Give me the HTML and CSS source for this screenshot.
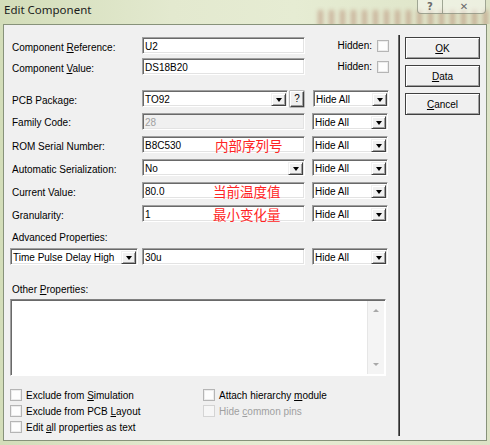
FILE: index.html
```html
<!DOCTYPE html>
<html>
<head>
<meta charset="utf-8">
<link rel="stylesheet" href="styles.css">
</head>
<body>
<div class="window">
  <div class="titlebar">
    <div class="glass"></div>
    <span class="title">Edit Component</span>
    <div class="caption">
      <div class="cbtn help">?</div>
      <div class="cbtn close">✕</div>
    </div>
  </div>
  <div class="client">
    <div class="main">
      <div class="row">
        <div class="lbl">Component <u>R</u>eference:</div>
        <div class="field w163">U2</div>
        <div class="hid"><span>Hidden:</span><span class="box"></span></div>
      </div>
      <div class="row mt4">
        <div class="lbl">Component <u>V</u>alue:</div>
        <div class="field w163">DS18B20</div>
        <div class="hid"><span>Hidden:</span><span class="box"></span></div>
      </div>
      <div class="row mt15">
        <div class="lbl">PCB Package:</div>
        <div class="field w146"><span>TO92</span><span class="arrow"></span></div>
        <div class="qbtn">?</div>
        <div class="field w76 sel9"><span>Hide All</span><span class="arrow"></span></div>
      </div>
      <div class="row mt6">
        <div class="lbl lbl-c">Family Code:</div>
        <div class="field w163 disabled">28</div>
        <div class="field w76 sel"><span>Hide All</span><span class="arrow"></span></div>
      </div>
      <div class="row mt6">
        <div class="lbl">ROM Serial Number:</div>
        <div class="field w163"><span class="val">B8C530</span><span class="note n2">内部序列号</span></div>
        <div class="field w76 sel"><span>Hide All</span><span class="arrow"></span></div>
      </div>
      <div class="row mt6">
        <div class="lbl">Automatic Serialization:</div>
        <div class="field w163"><span>No</span><span class="arrow"></span></div>
        <div class="field w76 sel"><span>Hide All</span><span class="arrow"></span></div>
      </div>
      <div class="row mt6">
        <div class="lbl">Current Value:</div>
        <div class="field w163"><span class="val">80.0</span><span class="note">当前温度值</span></div>
        <div class="field w76 sel"><span>Hide All</span><span class="arrow"></span></div>
      </div>
      <div class="row mt6">
        <div class="lbl">Granularity:</div>
        <div class="field w163"><span class="val">1</span><span class="note">最小变化量</span></div>
        <div class="field w76 sel"><span>Hide All</span><span class="arrow"></span></div>
      </div>
      <div class="caption-lbl adv">Advanced Properties:</div>
      <div class="row row-adv">
        <div class="field w128"><span>Time Pulse Delay High</span><span class="arrow"></span></div>
        <div class="field w163 ml4">30u</div>
        <div class="field w76 sel"><span>Hide All</span><span class="arrow"></span></div>
      </div>
      <div class="caption-lbl other">Other <u>P</u>roperties:</div>
      <div class="memo">
        <div class="vscroll"><span class="up"></span><span class="down"></span></div>
      </div>
      <div class="checks">
        <div class="chk"><span class="box"></span><span>Exclude from <u>S</u>imulation</span></div>
        <div class="chk"><span class="box"></span><span>Attach hierarchy <u>m</u>odule</span></div>
        <div class="chk"><span class="box"></span><span>Exclude from PCB <u>L</u>ayout</span></div>
        <div class="chk dis"><span class="box"></span><span>Hide <u>c</u>ommon pins</span></div>
        <div class="chk"><span class="box"></span><span>Edit <u>a</u>ll properties as text</span></div>
      </div>
    </div>
    <div class="sep"></div>
    <div class="side">
      <div class="btn"><span><u>O</u>K</span></div>
      <div class="btn"><span><u>D</u>ata</span></div>
      <div class="btn"><span><u>C</u>ancel</span></div>
    </div>
  </div>
</div>
</body>
</html>
```
FILE: styles.css
```css
* { box-sizing: border-box; }
html, body { margin: 0; padding: 0; }
body {
  width: 490px;
  height: 445px;
  overflow: hidden;
  background: #dce5c5;
  font-family: "Liberation Sans", Arial, sans-serif;
  font-size: 10px;
  color: #000;
}
u { text-decoration: underline; text-underline-offset: 1px; }

.window {
  width: 490px;
  height: 445px;
  display: flex;
  flex-direction: column;
  background: linear-gradient(90deg, #d3ddb9 0%, #e3e9cf 35%, #e6ecd3 60%, #dde3c6 100%);
  position: relative;
  overflow: hidden;
}
.titlebar {
  height: 24px;
  display: flex;
  align-items: flex-start;
  position: relative;
  overflow: hidden;
}
.glass {
  position: absolute;
  left: 318px;
  top: 10px;
  width: 172px;
  height: 18px;
  background:
    repeating-linear-gradient(90deg, rgba(150, 70, 50, 0.55) 0 5px, rgba(150, 70, 50, 0) 5px 11px);
  filter: blur(2.2px);
  opacity: 0.6;
}
.title {
  position: relative;
  font-family: "Noto Sans", sans-serif;
  font-size: 11.5px;
  color: #1b1b1b;
  padding: 0 0 0 4px;
  line-height: 19px;
}
.caption {
  position: relative;
  margin-left: auto;
  margin-right: 4px;
  display: flex;
}
.cbtn {
  height: 14px;
  border: 1px solid rgba(95, 105, 85, 0.55);
  border-top: none;
  background: rgba(255, 255, 255, 0.45);
  display: flex;
  align-items: center;
  justify-content: center;
  color: #6a6a6a;
  font-family: "DejaVu Sans", sans-serif;
  font-size: 10px;
  font-weight: bold;
  line-height: 12px;
}
.help { width: 26px; border-bottom-left-radius: 4px; }
.close { width: 43px; border-left: none; border-bottom-right-radius: 4px; }

.client {
  margin: 0 3px;
  height: 417px;
  border: 1px solid #87927a;
  background: #f0f0f0;
  display: flex;
}
.main { width: 394px; padding-top: 12px; }
.sep {
  width: 2px;
  margin-top: 10px;
  height: 401px;
  background: #2e2e2e;
  border-left: 1px solid #6a6a6a;
}
.side {
  padding: 12px 0 0 5px;
  display: flex;
  flex-direction: column;
  gap: 6px;
}
.btn {
  width: 75px;
  height: 22px;
  background: #f0f0f0;
  border: 1px solid #404040;
  box-shadow: inset 1px 1px 0 #fff, inset -1px -1px 0 #a0a0a0;
  display: flex;
  align-items: center;
  justify-content: center;
}

.row {
  display: flex;
  align-items: center;
  height: 17px;
  padding-left: 8px;
}
.mt4 { margin-top: 4px; }
.mt6 { margin-top: 6px; }
.mt15 { margin-top: 15px; }
.lbl {
  width: 130px;
  white-space: nowrap;
  padding-top: 4px;
  line-height: 13px;
}
.lbl-c { padding-top: 1px; }

.field {
  height: 17px;
  background: #fff;
  border: 1px solid;
  border-color: #a0a0a0 #fff #fff #a0a0a0;
  box-shadow: inset 1px 1px 0 #696969, inset -1px -1px 0 #e3e3e3;
  padding: 2px 1px 1px 2px;
  display: flex;
  align-items: center;
  line-height: 13px;
  white-space: nowrap;
}
.w163 { width: 163px; }
.w146 { width: 146px; }
.w128 { width: 128px; }
.w76 { width: 76px; }
.sel { margin-left: 7px; }
.sel9 { margin-left: 9px; }
.ml4 { margin-left: 4px; }
.disabled { background: #f0f0f0; color: #a0a0a0; }

.arrow {
  margin-left: auto;
  align-self: flex-end;
  margin-bottom: -1px;
  width: 15px;
  height: 13px;
  background: #f0f0f0;
  border: 1px solid;
  border-color: #f0f0f0 #404040 #404040 #f0f0f0;
  box-shadow: inset 1px 1px 0 #fff, inset -1px -1px 0 #a0a0a0;
  display: flex;
  align-items: center;
  justify-content: center;
}
.arrow::after {
  content: "";
  border-left: 3.5px solid transparent;
  border-right: 3.5px solid transparent;
  border-top: 4px solid #000;
}
.qbtn {
  width: 14px;
  height: 16px;
  margin-left: 2px;
  background: #f0f0f0;
  border: 1px solid;
  border-color: #fff #404040 #404040 #fff;
  box-shadow: inset -1px -1px 0 #a0a0a0, 0 0 0 0.5px #808080;
  text-align: center;
  line-height: 14px;
}

.hid {
  width: 84px;
  display: flex;
  justify-content: flex-end;
  align-items: center;
  gap: 5px;
}

.val { width: 68px; }
.note {
  font-family: "Noto Sans CJK SC", sans-serif;
  font-size: 13.5px;
  line-height: 13px;
  color: #ff2424;
}
.n2 { margin-left: 2px; }

.caption-lbl { padding-left: 8px; line-height: 14px; }
.adv { margin-top: 9px; }
.row-adv { margin-top: 3px; padding-left: 6px; }
.other { margin-top: 18px; }

.memo {
  margin: 2px 0 0 6px;
  width: 376px;
  height: 77px;
  background: #fff;
  border: 1px solid;
  border-color: #808080 #fff #fff #a0a0a0;
  box-shadow: inset 1px 1px 0 #696969;
  padding: 1px;
  display: flex;
  justify-content: flex-end;
}
.vscroll {
  width: 17px;
  background: #f4f4f4;
  border-left: 1px solid #e6e6e6;
  display: flex;
  flex-direction: column;
  justify-content: space-between;
  align-items: center;
  padding: 8px 0;
}
.up {
  border-left: 3px solid transparent;
  border-right: 3px solid transparent;
  border-bottom: 3px solid #a8a8a8;
}
.down {
  border-left: 3px solid transparent;
  border-right: 3px solid transparent;
  border-top: 3px solid #a8a8a8;
}

.checks {
  margin: 11px 0 0 6px;
  display: grid;
  grid-template-columns: 193px 180px;
  grid-auto-rows: 16px;
}
.chk {
  display: flex;
  align-items: center;
  gap: 4px;
  white-space: nowrap;
}
.box {
  display: inline-block;
  width: 12px;
  height: 12px;
  border: 1px solid #b5b5b5;
  background: #fdfdfd;
  box-shadow: inset 0 0 0 1px #ececec;
}
.dis { color: #a0a0a0; }
.dis .box { border-color: #d4d4d4; box-shadow: none; background: #f6f6f6; }
```
